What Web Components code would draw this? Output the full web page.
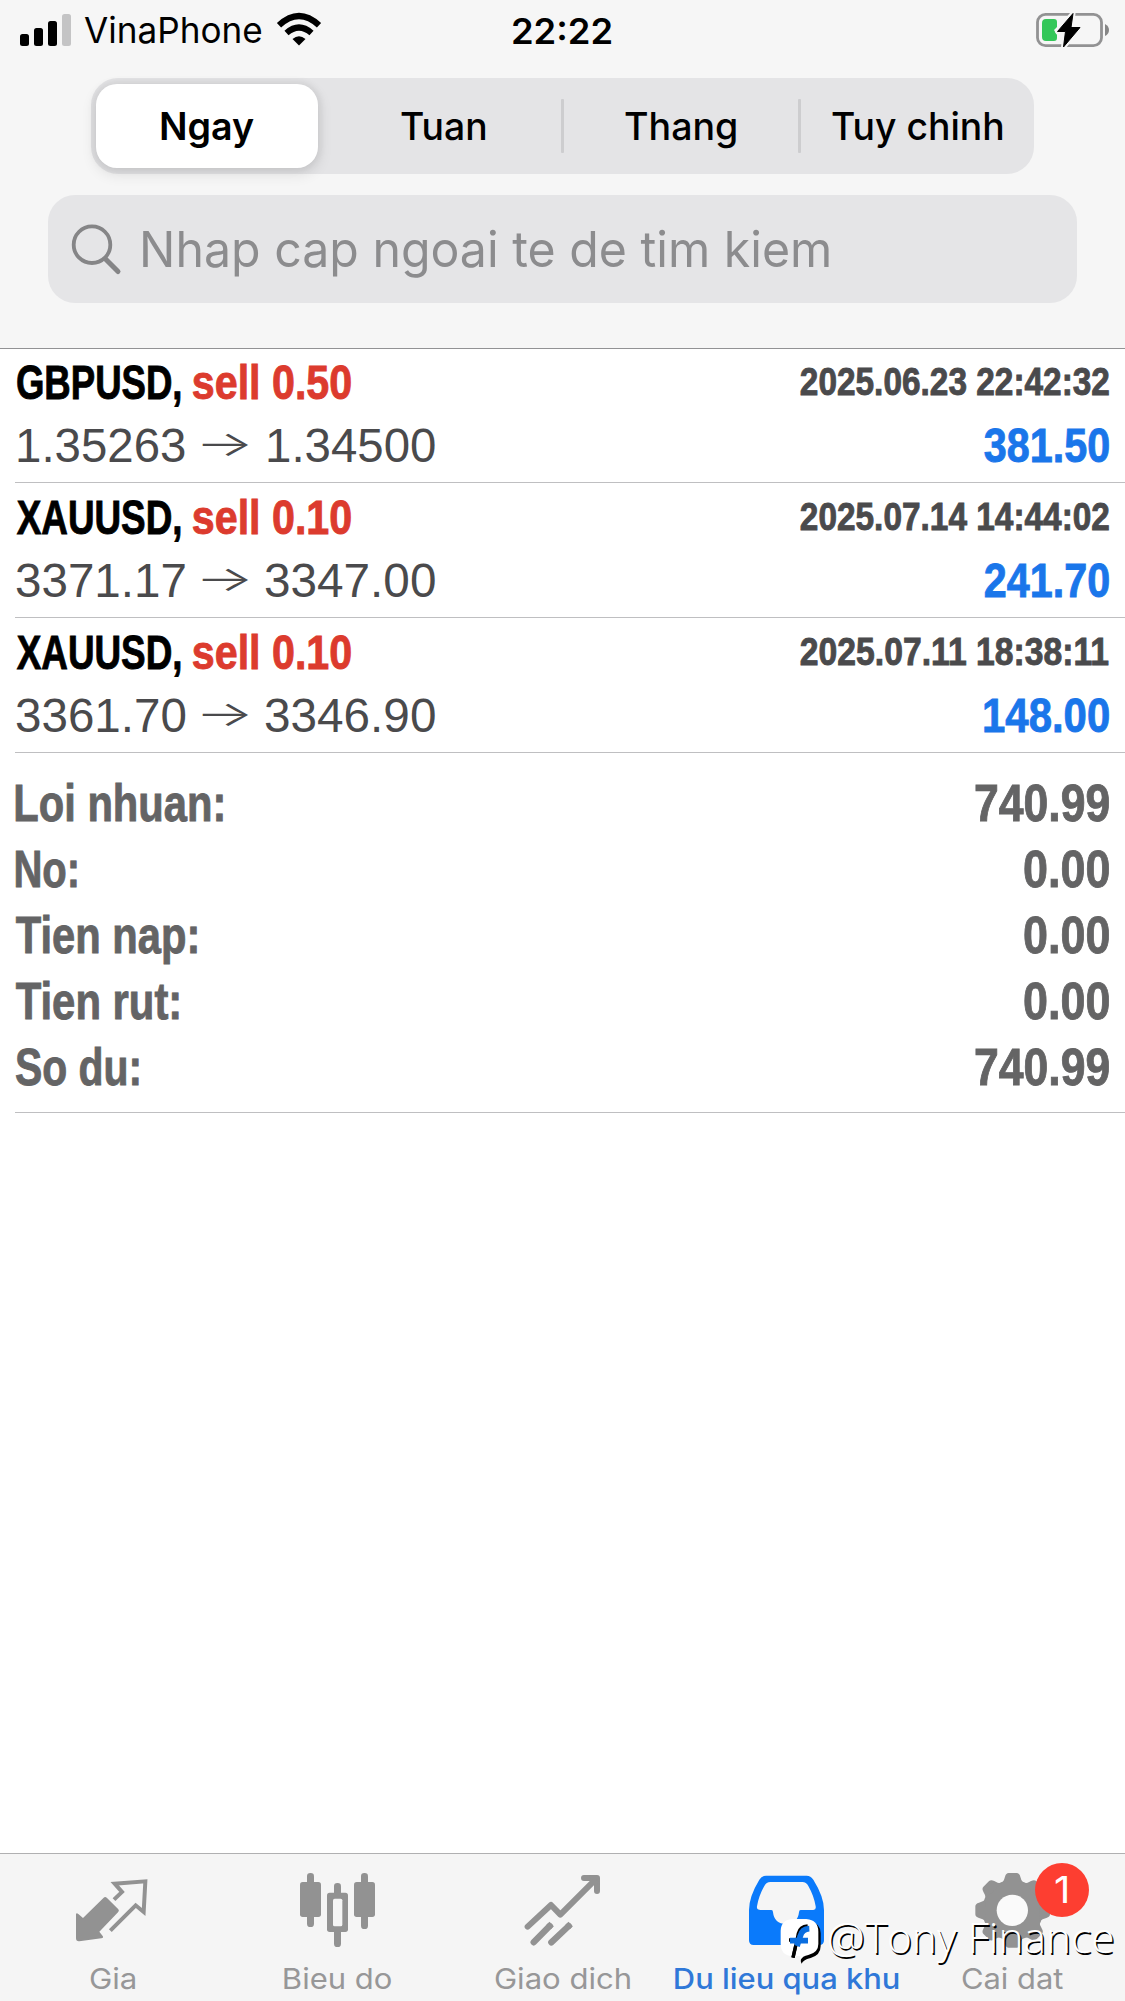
<!DOCTYPE html>
<html lang="vi">
<head>
<meta charset="utf-8">
<title>History</title>
<style>
html,body{margin:0;padding:0;background:#fff}
body{width:1125px;height:2001px;overflow:hidden;font-family:Inter,"Liberation Sans",sans-serif}
</style>
</head>
<body>
<history-screen></history-screen>
<script>
const UI = 'Inter, "Liberation Sans", sans-serif';
const NARROW = '"Liberation Sans Narrow", "Liberation Sans", sans-serif';
const SANS = '"Liberation Sans", Arial, sans-serif';
const ctx = document.createElement('canvas').getContext('2d');
const make = (name, render) => customElements.define(name, class extends HTMLElement {
  connectedCallback() {
    if (this.shadowRoot) return;
    this.attachShadow({ mode: 'open' }).innerHTML = render(this);
  }
});
const a = (el, n, d = '') => el.getAttribute(n) ?? d;

/* A line of text whose box is its ink: w wide, cap high, with the baseline on the bottom edge. */
make('fit-text', el => {
  const text = a(el, 'text'), size = +a(el, 'size'), w = +a(el, 'w'), cap = +a(el, 'cap');
  const weight = a(el, 'weight', '400'), face = a(el, 'face');
  const family = { narrow: NARROW, sans: SANS, light: '"Open Sans", "Noto Sans", sans-serif' }[face] || UI;
  ctx.font = `${weight} ${size}px ${family}`;
  const m = ctx.measureText(text);
  const k = w / (m.actualBoundingBoxRight + m.actualBoundingBoxLeft);
  const asc = m.fontBoundingBoxAscent, desc = m.fontBoundingBoxDescent;
  const base = (size - asc - desc) / 2 + asc;
  return `<style>
    :host{display:block;flex:none;width:${w}px;height:${cap}px}
    span{display:block;width:max-content;white-space:pre;font:${weight} ${size}px/${size}px ${family};
      ${face === 'narrow' ? '-webkit-text-stroke:.9px currentColor;' : ''}
      transform-origin:0 0;transform:translate(${m.actualBoundingBoxLeft * k - (face === 'narrow' ? .3 : 1)}px,${cap - base}px) scaleX(${k})}
  </style><span>${text}</span>`;
});

make('status-bar', () => `<style>
  :host{display:flex;justify-content:space-between;height:78px;padding:0 14px 0 20px;box-sizing:border-box;color:#000}
  .l,.r{display:flex;width:360px}
  .r{justify-content:flex-end}
  svg{display:block;flex:none}
  fit-text{margin-top:18px}
  .l fit-text{margin-left:13px}
  .wifi{margin-left:14px}
</style>
<div class="l">
  <svg width="52" height="60" viewBox="0 0 52 60"><rect x="0" y="34" width="9" height="12" rx="2.5"/><rect x="14" y="28" width="9" height="18" rx="2.5"/><rect x="28" y="21" width="9" height="25" rx="2.5"/><rect x="42" y="14" width="9" height="32" rx="2.5" fill="#c4c4c5"/></svg>
  <fit-text text="VinaPhone" w="177" size="35.5" cap="25.7"></fit-text>
  <svg class="wifi" width="46" height="60" viewBox="0 0 46 60"><g fill="none" stroke="#000" stroke-width="6.2"><path d="M3 25.3Q23 6.8 43 25.3"/><path d="M10.5 33Q23 22 35.5 33"/></g><path d="M16.5 39Q23 33.5 29.5 39L23 45.6Z"/></svg>
</div>
<fit-text text="22:22" w="98" size="35.5" cap="26" weight="600" style="margin-right:5px"></fit-text>
<div class="r">
  <svg width="76" height="60" viewBox="1035 0 76 60"><rect x="1037.5" y="14.3" width="64" height="31.4" rx="8" fill="none" stroke="#929293" stroke-width="2.8"/><path d="M1105 24q4 2 4 6t-4 6z" fill="#868686"/><path d="M1046 19h8q3 0 3 3v5l-3 3 3 5v3q0 3-3 3h-8q-4 0-4-4V23q0-4 4-4Z" fill="#34c759"/><path d="M1073 13.5L1057.5 31.5h8L1063.5 47 1080 27.5h-9z" fill="#000" stroke="#f6f6f6" stroke-width="5" stroke-linejoin="round"/><path d="M1073 13.5L1057.5 31.5h8L1063.5 47 1080 27.5h-9z" stroke="#000" stroke-linejoin="round"/></svg>
</div>`);

make('segmented-control', () => `<style>
  :host{display:flex;width:943px;height:95.5px;margin-left:91px;border-radius:27px;background:#e4e4e6;box-sizing:border-box;padding:6px 0 5.5px 5px}
  div{display:flex;justify-content:center;box-sizing:border-box;height:84px;padding-top:28.5px;flex:none}
  .on{width:222px;border-radius:21px;background:#fff;box-shadow:0 0 6px 3px rgba(0,0,0,.05),0 5px 14px 2px rgba(0,0,0,.09);padding-left:2px}
  i{width:2.5px;height:54px;margin-top:14.5px;background:#cdcdcf;border-radius:1px;flex:none}
</style>
<div class="on"><fit-text text="Ngay" w="93" size="37.8" cap="27.5" weight="600"></fit-text></div>
<div style="width:243px;padding-left:8px"><fit-text text="Tuan" w="84" size="37.8" cap="27.5" weight="500"></fit-text></div><i></i>
<div style="width:234.5px;padding-left:2px"><fit-text text="Thang" w="111" size="37.8" cap="27.5" weight="500"></fit-text></div><i></i>
<div style="width:234px;padding-left:1px"><fit-text text="Tuy chinh" w="171" size="37.8" cap="27.5" weight="500"></fit-text></div>`);

make('search-field', () => `<style>
  :host{display:flex;width:1029px;height:108px;margin:21.5px 0 0 48px;border-radius:27px;background:#e5e5e7;color:#8c8c8e}
  svg{flex:none;width:95px;height:108px}
  fit-text{margin:36.5px 0 0 1px}
</style>
<svg viewBox="48 195 95 108" fill="none" stroke="#858587" stroke-linecap="round"><circle cx="92" cy="244.7" r="18.3" stroke-width="3.8"/><path d="M105.5 259l12.5 12.5" stroke-width="5"/></svg>
<fit-text text="Nhap cap ngoai te de tim kiem" w="686" size="49.5" cap="36"></fit-text>`);

make('deal-row', el => `<style>
  :host{display:block;height:135px;margin-left:15px;padding-right:16.5px;box-sizing:border-box;border-bottom:1px solid #bfbfc1}
  .line{display:flex;justify-content:space-between}
  .a{height:49px;padding-top:18px}.b{height:40px;padding-top:13.5px}
  .pair{display:flex}
  .a{align-items:flex-start;color:#4a4a4c}
  .b{color:#4a4a4c}
</style>
<div class="line a">
  <div class="pair"><fit-text style="color:#000;margin-left:1.5px" text="${a(el, 'symbol')}," w="164" size="48" cap="33.5" face="narrow" weight="700"></fit-text>
  <fit-text style="color:#dc3b2e;margin-left:12px" text="${a(el, 'side')}" w="158" size="48" cap="33.5" face="narrow" weight="700"></fit-text></div>
  <fit-text text="${a(el, 'time')}" w="308" size="38.5" cap="30" face="narrow" weight="700"></fit-text>
</div>
<div class="line b">
  <div class="pair"><fit-text style="margin-left:${a(el, 'x1')}px" text="${a(el, 'open')}" w="${a(el, 'w1')}" size="47.5" cap="33.5" face="sans"></fit-text>
  <fit-text style="margin:-5.5px 0 0 16.5px" text="→" w="46" size="35" cap="33.5" weight="300"></fit-text>
  <fit-text style="margin-left:${a(el, 'x2')}px" text="${a(el, 'close')}" w="${a(el, 'w2')}" size="47.5" cap="33.5" face="sans"></fit-text></div>
  <fit-text style="color:#1a76ea" text="${a(el, 'profit')}" w="124" size="48" cap="33.5" face="narrow" weight="700"></fit-text>
</div>`);

make('summary-row', el => `<style>
  :host{display:flex;justify-content:space-between;height:66px;color:#646465}
</style>
<fit-text text="${a(el, 'label')}" w="${a(el, 'lw')}" size="52.5" cap="36.3" face="narrow" weight="700"></fit-text>
<fit-text text="${a(el, 'value')}" w="${a(el, 'vw')}" size="52" cap="36.3" face="narrow" weight="700"></fit-text>`);

const tooth = 'M380 130Q388 122 390 110Q393 99 401 99H425Q433 99 436 110Q438 122 446 130Z';
const icons = {
  quotes: `<g fill="#929292"><path d="M311 173q5-4 10 1l34 34q4 5-1 9l-56 58 10 13q4 5-4 7l-66 9q-10 1-10-9v-72q1-6 7-1l14 12z"/></g><g fill="none" stroke="#929292" stroke-width="12"><path d="M342 179l24-23-22-25 92-7-5 92-24-20-76 76" stroke-linejoin="miter"/></g>`,
  chart: `<g fill="#929292"><rect x="900" y="126" width="63" height="105" rx="8"/><rect x="921" y="99" width="21" height="162" rx="10"/><rect x="1062" y="126" width="63" height="105" rx="8"/><rect x="1083" y="99" width="21" height="168" rx="10"/><rect x="1002" y="129" width="21" height="192" rx="10"/><rect x="981" y="158" width="63" height="118" rx="8"/></g><rect x="999" y="176" width="28" height="83" rx="5" fill="#f5f5f5"/>`,
  trade: `<g fill="none" stroke="#929292" stroke-width="18" stroke-linecap="round" stroke-linejoin="round"><path d="M383 260l70-65 28 29 108-108M552 114h39v39"/><path d="M572 110l24 20" stroke-width="8"/></g><g stroke="#929292" stroke-width="19" stroke-linecap="round"><path d="M401 307l48-49M454 307l52-49"/><path d="M446 261l9-9M503 261l9-9" stroke-linecap="butt"/></g>`,
  history: `<path fill="#0a7afb" fill-rule="evenodd" d="M318 107H440Q452 107 460 119Q492 170 492 210V301Q492 315 478 315H281Q267 315 267 301V210Q267 170 298 119Q306 107 318 107ZM331 126Q319 126 313 138Q296 168 291 199Q289 210 302 210H334Q339 210 339 217Q343 252 378 252Q413 252 417 217Q417 210 422 210H460Q469 210 467 199Q462 168 445 138Q439 126 427 126Z"/>`,
  settings: `<g fill="#929292"><circle cx="413" cy="211" r="91"/>${[0,45,90,135,180,225,270,315].map(r => `<path d="${tooth}" transform="rotate(${r} 413 211)"/>`).join('')}</g><circle cx="412" cy="211" r="47" fill="#fafafa"/>`
};
make('tab-item', el => `<style>
  :host{display:flex;flex-direction:column;align-items:center;width:225px;flex:none;color:#979798}
  :host([on]){color:#2f78d8}
  svg{display:block;width:225px;height:100px;margin-bottom:14.7px}
  fit-text{position:relative;left:.5px}
</style>
<svg viewBox="${a(el, 'ox')} 42 675 300">${icons[a(el, 'icon')]}</svg>
<fit-text text="${a(el, 'label')}" w="${a(el, 'w')}" size="28.8" cap="20.7" weight="${a(el, 'weight', '400')}"></fit-text>`);

make('count-badge', el => `<style>
  :host{position:absolute;left:1035px;top:9px;width:54px;height:54px;border-radius:50%;background:#fd3e31;color:#fff;display:flex;align-items:center;justify-content:center}
</style><fit-text text="${a(el, 'n')}" w="12" size="37" cap="27" style="margin:-1px 1px 0 0"></fit-text>`);

make('author-mark', () => `<style>
  :host{position:absolute;left:779px;top:62px;display:flex;color:#fff;text-shadow:1.5px 1.5px 0 #000}
  svg{display:block;width:46px;height:54px}
  fit-text{margin:5.5px 0 0 5px}
</style>
<svg viewBox="360 228 138 162"><path d="M450 243Q484 248 485 280V318Q485 345 455 354Q431 360 428 371Q421 358 432 350Z" fill="#000"/><path d="M400 237H442Q478 240 478 275V312Q478 338 448 345Q430 348 424 360L424 348H398Q366 346 365 312V272Q366 240 400 237Z" fill="#fff"/><g fill="none"><path d="M402 353L414 300L418 280Q423 260 446 258M390 300H442" stroke="#000" stroke-width="10"/><path d="M414 318L424 288Q429 267 451 266M393 302H447" stroke="#0a6ee0" stroke-width="17"/><path d="M402 353L410 318" stroke="#000" stroke-width="10"/></g></svg>
<fit-text text="@Tony Finance" w="284" size="43" cap="31" face="light" weight="300"></fit-text>`);

make('tab-bar', () => `<style>
  :host{display:flex;position:relative;height:148px;box-sizing:border-box;border-top:1px solid #b0b0b1;background:#f5f5f5}
</style>
<tab-item icon="quotes" ox="0" label="Gia" w="45"></tab-item>
<tab-item icon="chart" ox="675" label="Bieu do" w="107"></tab-item>
<tab-item icon="trade" ox="150" label="Giao dich" w="135"></tab-item>
<tab-item on icon="history" ox="45" label="Du lieu qua khu" w="224" weight="500"></tab-item>
<tab-item icon="settings" ox="75" label="Cai dat" w="101"></tab-item>
<count-badge n="1"></count-badge>
<author-mark></author-mark>`);

make('history-screen', () => `<style>
  :host{display:flex;flex-direction:column;width:1125px;height:2001px;background:#fff}
  header{height:348px;background:#f6f6f6;border-bottom:1px solid #929294;flex:none}
  main{flex:1}
  deal-row:first-child{margin-top:-1px}
  .sum{margin-left:15px;padding:31.5px 16.5px 0 1px;height:327.5px;border-bottom:1px solid #bfbfc1}
</style>
<header><status-bar></status-bar><segmented-control></segmented-control><search-field></search-field></header>
<main>
  <deal-row symbol="GBPUSD" side="sell 0.50" time="2025.06.23 22:42:32" open="1.35263" close="1.34500" x1="4" w1="167" x2="20" w2="167" profit="381.50"></deal-row>
  <deal-row symbol="XAUUSD" side="sell 0.10" time="2025.07.14 14:44:02" open="3371.17" close="3347.00" x1="1.5" w1="169.5" x2="17" w2="170" profit="241.70"></deal-row>
  <deal-row symbol="XAUUSD" side="sell 0.10" time="2025.07.11 18:38:11" open="3361.70" close="3346.90" x1="1.5" w1="169.5" x2="17" w2="170" profit="148.00"></deal-row>
  <div class="sum">
    <summary-row label="Loi nhuan:" lw="207" value="740.99" vw="133"></summary-row>
    <summary-row label="No:" lw="61" value="0.00" vw="84"></summary-row>
    <summary-row label="Tien nap:" lw="181" value="0.00" vw="84"></summary-row>
    <summary-row label="Tien rut:" lw="163" value="0.00" vw="84"></summary-row>
    <summary-row label="So du:" lw="123" value="740.99" vw="133"></summary-row>
  </div>
</main>
<tab-bar></tab-bar>`);
</script>
</body>
</html>
